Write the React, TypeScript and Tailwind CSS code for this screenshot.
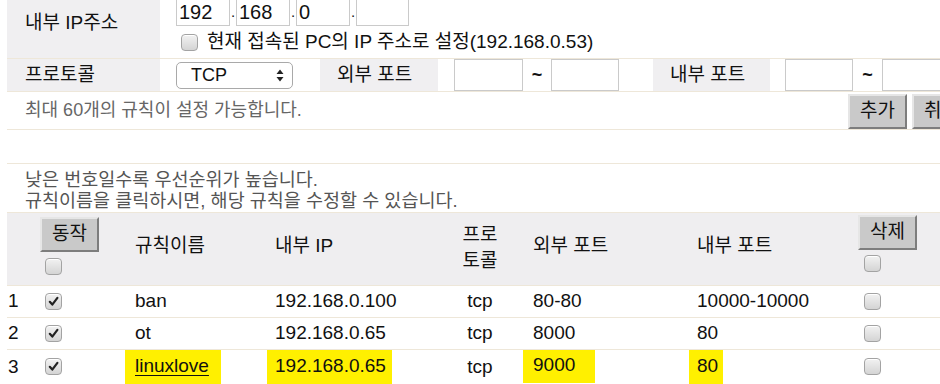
import React from 'react'

// ─── small pieces ─────────────────────────────────────────────────────────

function Check({ checked = false, className = '' }: { checked?: boolean; className?: string }) {
  return (
    <span
      className={
        'flex h-[17px] w-[17px] shrink-0 items-center justify-center rounded-[4px] border border-[#a3a3a3] bg-gradient-to-b from-[#f2f2f2] to-[#d4d4d4] shadow-[inset_0_1px_0_#fff] ' +
        className
      }
    >
      {checked && (
        <svg width="11" height="11" viewBox="0 0 11 11">
          <path d="M1.8 5.8 L4.3 8.6 L9.4 1.8" fill="none" stroke="#222" strokeWidth="2.2" strokeLinecap="round" strokeLinejoin="round" />
        </svg>
      )}
    </span>
  )
}

function GrayButton({ label, className = '' }: { label: string; className?: string }) {
  return (
    <span
      className={
        'flex h-[35px] w-[59px] items-center justify-center border-2 border-t-[#e6e6e6] border-l-[#e6e6e6] border-r-[#7d7d7d] border-b-[#7d7d7d] bg-[#c9c9c9] text-[19px] text-[#111] ' +
        className
      }
    >
      {label}
    </span>
  )
}

function Box({ value = '', className = '' }: { value?: string; className?: string }) {
  return (
    <span className={'flex items-center border border-[#cacaca] bg-white px-[2px] text-[20px] ' + className}>
      {value}
    </span>
  )
}

function Mark({ children, className = '' }: { children: React.ReactNode; className?: string }) {
  return <span className={'inline-block bg-[#fff000] ' + className}>{children}</span>
}

// ─── data ─────────────────────────────────────────────────────────────────

const rules = [
  { no: '1', name: 'ban', ip: '192.168.0.100', proto: 'tcp', ext: '80-80', int: '10000-10000' },
  { no: '2', name: 'ot', ip: '192.168.0.65', proto: 'tcp', ext: '8000', int: '80' },
]

const cols = 'grid grid-cols-[33px_95px_140px_170px_70px_182px_161px_1fr]'

// ─── App ──────────────────────────────────────────────────────────────────

export default function App() {
  return (
    <div className="h-[384px] w-[940px] overflow-hidden bg-white font-['Liberation_Sans','Noto_Sans_CJK_KR',sans-serif] text-[#111]">
      <div className="w-[1010px] pl-[7px]">
        {/* 내부 IP주소 */}
        <div className="flex h-[59px] border-b border-[#eee7d9]">
          <div className="w-[153px] bg-[#f0eff1] pl-[18px] pt-[11px] text-[19px] leading-[24px]">내부 IP주소</div>
          <div className="flex flex-col pl-[16px]">
            <div className="-mt-[2px] flex h-[28px] items-stretch">
              <Box value="192" className="w-[54px]" />
              <span className="flex w-[6px] items-end justify-center pb-[3px] text-[15px]">.</span>
              <Box value="168" className="w-[54px]" />
              <span className="flex w-[6px] items-end justify-center pb-[3px] text-[15px]">.</span>
              <Box value="0" className="w-[54px]" />
              <span className="flex w-[6px] items-end justify-center pb-[3px] text-[15px]">.</span>
              <Box className="w-[53px]" />
            </div>
            <div className="mt-[4px] flex items-center gap-[9px] pl-[5px] text-[19px] leading-[24px]">
              <Check />
              <span>현재 접속된 PC의 IP 주소로 설정(192.168.0.53)</span>
            </div>
          </div>
        </div>

        {/* 프로토콜 / 포트 */}
        <div className="flex h-[33px] border-b border-[#eee7d9] text-[19px]">
          <div className="flex w-[153px] items-center bg-[#f0eff1] pl-[18px]">프로토콜</div>
          <div className="flex items-center pl-[16px]">
            <span className="flex h-[27px] w-[117px] items-center justify-between rounded-[5px] border border-[#a9a9a9] bg-white pl-[14px] pr-[8px] text-[18px]">
              TCP
              <svg width="8" height="13" viewBox="0 0 8 13">
                <path d="M4 0.5 L7.5 5 L0.5 5 Z M4 12.5 L7.5 8 L0.5 8 Z" fill="#222" />
              </svg>
            </span>
          </div>
          <div className="w-[27px]" />
          <div className="flex w-[118px] items-center bg-[#f0eff1] pl-[17px]">외부 포트</div>
          <div className="w-[16px]" />
          <Box className="w-[69px]" />
          <span className="flex w-[28px] items-center justify-center text-[18px] font-bold">~</span>
          <Box className="w-[68px]" />
          <div className="w-[34px]" />
          <div className="flex w-[117px] items-center bg-[#f0eff1] pl-[17px]">내부 포트</div>
          <div className="w-[15px]" />
          <Box className="w-[68px]" />
          <span className="flex w-[29px] items-center justify-center text-[18px] font-bold">~</span>
          <Box className="w-[68px]" />
        </div>

        {/* 추가 / 취소 */}
        <div className="flex h-[38px] items-center border-b border-[#eee7d9] pr-[39px]">
          <span className="flex-1 pl-[18px] text-[18px] text-[#666]">최대 60개의 규칙이 설정 가능합니다.</span>
          <div className="flex gap-[5px] self-end">
            <GrayButton label="추가" className="w-[58px]" />
            <GrayButton label="취소" className="w-[58px]" />
          </div>
        </div>
        <div className="h-[34px] border-b border-[#eee7d9]" />

        {/* 안내 */}
        <div className="pb-[1px] pl-[18px] pt-[5px] text-[18.5px] leading-[21px] text-[#555]">
          <p>낮은 번호일수록 우선순위가 높습니다.</p>
          <p>규칙이름을 클릭하시면, 해당 규칙을 수정할 수 있습니다.</p>
        </div>

        {/* 규칙 목록 */}
        <div className="w-[933px] text-[19px]">
          <div className={cols + ' h-[73px] border-t border-[#eee7d9] bg-[#efeef0]'}>
            <div />
            <div className="flex flex-col pt-[4px]">
              <GrayButton label="동작" />
              <Check className="ml-[5px] mt-[6px]" />
            </div>
            <div className="flex items-center pb-[6px]">규칙이름</div>
            <div className="flex items-center pb-[6px]">내부 IP</div>
            <div className="flex flex-col items-center justify-center pb-[2px] leading-[26px]">
              <span>프로</span>
              <span>토콜</span>
            </div>
            <div className="flex items-center pb-[6px] pl-[18px]">외부 포트</div>
            <div className="flex items-center pb-[6px]">내부 포트</div>
            <div className="flex flex-col pt-[2px]">
              <GrayButton label="삭제" />
              <Check className="ml-[6px] mt-[5px]" />
            </div>
          </div>

          {rules.map(r => (
            <div key={r.no} className={cols + ' h-[32px] items-center border-t border-[#eee7d9]'}>
              <span className="pl-[1px]">{r.no}</span>
              <Check checked className="ml-[5px]" />
              <span>{r.name}</span>
              <span>{r.ip}</span>
              <span className="text-center">{r.proto}</span>
              <span className="pl-[18px]">{r.ext}</span>
              <span>{r.int}</span>
              <Check className="ml-[6px]" />
            </div>
          ))}

          <div className={cols + ' h-[34px] items-center border-t border-[#eee7d9]'}>
            <span className="pl-[1px]">3</span>
            <Check checked className="ml-[5px]" />
            <span>
              <Mark className="-ml-[10px] pb-[3px] pl-[10px] pr-[12px] pt-[2px]">
                <span className="underline decoration-1 underline-offset-[3px]">linuxlove</span>
              </Mark>
            </span>
            <span>
              <Mark className="-ml-[8px] pb-[3px] pl-[8px] pr-[6px] pt-[2px]">192.168.0.65</Mark>
            </span>
            <span className="text-center">tcp</span>
            <span className="pl-[18px]">
              <Mark className="-ml-[10px] -mt-[4px] pb-[4px] pl-[10px] pr-[20px] pt-[1px]">9000</Mark>
            </span>
            <span>
              <Mark className="-ml-[8px] pb-[3px] pl-[8px] pr-[5px] pt-[2px]">80</Mark>
            </span>
            <Check className="ml-[6px]" />
          </div>
        </div>
      </div>
    </div>
  )
}
